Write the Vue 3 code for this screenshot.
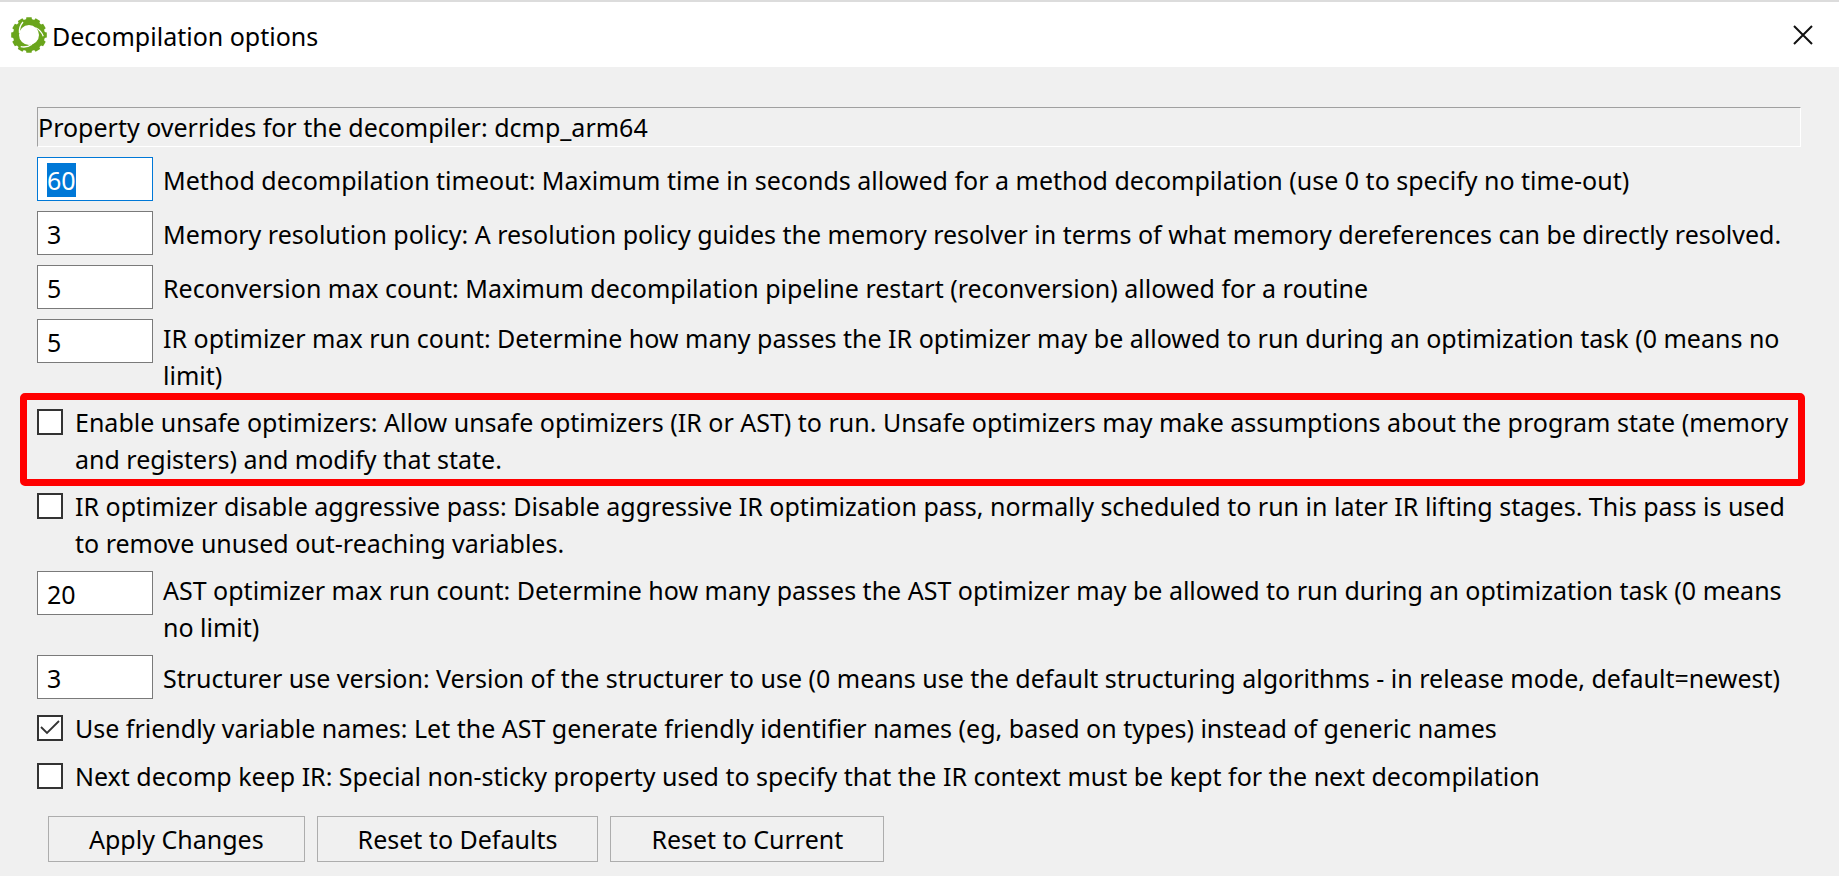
<script setup>
import { onMounted, reactive, ref } from 'vue'

const options = reactive([
  { id: 'timeout', kind: 'number', value: '60', text: 'Method decompilation timeout: Maximum time in seconds allowed for a method decompilation (use 0 to specify no time-out)' },
  { id: 'memory', kind: 'number', value: '3', text: 'Memory resolution policy: A resolution policy guides the memory resolver in terms of what memory dereferences can be directly resolved.' },
  { id: 'reconversion', kind: 'number', value: '5', text: 'Reconversion max count: Maximum decompilation pipeline restart (reconversion) allowed for a routine' },
  { id: 'ir-runs', kind: 'number', value: '5', text: 'IR optimizer max run count: Determine how many passes the IR optimizer may be allowed to run during an optimization task (0 means no limit)' },
  { id: 'unsafe', kind: 'check', value: false, marked: true, text: 'Enable unsafe optimizers: Allow unsafe optimizers (IR or AST) to run. Unsafe optimizers may make assumptions about the program state (memory and registers) and modify that state.' },
  { id: 'aggressive', kind: 'check', value: false, text: 'IR optimizer disable aggressive pass: Disable aggressive IR optimization pass, normally scheduled to run in later IR lifting stages. This pass is used to remove unused out-reaching variables.' },
  { id: 'ast-runs', kind: 'number', value: '20', text: 'AST optimizer max run count: Determine how many passes the AST optimizer may be allowed to run during an optimization task (0 means no limit)' },
  { id: 'structurer', kind: 'number', value: '3', text: 'Structurer use version: Version of the structurer to use (0 means use the default structuring algorithms - in release mode, default=newest)' },
  { id: 'friendly', kind: 'check', value: true, text: 'Use friendly variable names: Let the AST generate friendly identifier names (eg, based on types) instead of generic names' },
  { id: 'keep-ir', kind: 'check', value: false, text: 'Next decomp keep IR: Special non-sticky property used to specify that the IR context must be kept for the next decompilation' }
])

const form = ref(null)
onMounted(() => {
  const first = form.value.querySelector('input')
  first.focus()
  first.select()
})

const teeth = Array.from({ length: 12 }, (_, i) => i * 30)
</script>

<template>
  <div class="dialog">
    <header class="titlebar">
      <svg class="logo" viewBox="0 0 36 36" aria-hidden="true">
        <g fill="#6aa51c">
          <path v-for="a in teeth" :key="a" d="M14.6 5 L15.4 0.2 H20.6 L21.4 5 Z" :transform="`rotate(${a} 18 18)`" />
        </g>
        <circle cx="18" cy="18" r="13" fill="none" stroke="#6aa51c" stroke-width="6" />
        <g fill="none" stroke="#fff" stroke-width="1.3">
          <path d="M8.5 16 C8 12 9 8.5 12 5" />
          <path d="M8.5 16 C8 12 9 8.5 12 5" transform="rotate(120 18 18)" />
          <path d="M8.5 16 C8 12 9 8.5 12 5" transform="rotate(240 18 18)" />
        </g>
      </svg>
      <h1>Decompilation options</h1>
      <button class="close" type="button" aria-label="Close">
        <svg viewBox="0 0 20 20" aria-hidden="true"><path d="M1 1 L19 19 M19 1 L1 19" fill="none" stroke="#111" stroke-width="2" /></svg>
      </button>
    </header>

    <form ref="form" class="body" @submit.prevent>
      <p class="heading">Property overrides for the decompiler: dcmp_arm64</p>
      <div v-for="o in options" :key="o.id" class="row" :class="[o.kind, { marked: o.marked }]">
        <input v-if="o.kind === 'number'" :id="o.id" v-model="o.value" class="field" type="text" />
        <span v-else class="box">
          <input :id="o.id" v-model="o.value" type="checkbox" />
          <svg v-if="o.value" viewBox="0 0 26 26" aria-hidden="true"><path d="M4 12 L10 18 L22 6" fill="none" stroke="#333" stroke-width="1.8" /></svg>
        </span>
        <label :for="o.id">{{ o.text }}</label>
      </div>
      <div class="actions">
        <button type="button">Apply Changes</button>
        <button type="button">Reset to Defaults</button>
        <button type="button">Reset to Current</button>
      </div>
    </form>
  </div>
</template>

<style>
body { background: #f0f0f0; }
</style>

<style scoped>
.dialog {
  box-sizing: border-box;
  min-height: 100vh;
  border-top: 2px solid #dcdcdc;
  background: #f0f0f0;
  color: #000;
  font-family: "Noto Sans", "Open Sans", sans-serif;
  font-size: 25px;
  line-height: 37px;
}
.titlebar {
  display: flex;
  align-items: center;
  height: 65px;
  padding: 0 26px 0 11px;
  background: #fff;
}
.logo { width: 36px; height: 36px; flex: none; }
h1 { flex: 1; margin: 0 0 0 5px; padding-top: 3px; font-size: inherit; font-weight: 400; }
.close { display: flex; padding: 0; border: 0; background: none; }
.close svg { width: 20px; height: 20px; }
.body { display: flex; flex-direction: column; gap: 10px; padding: 40px 38px 12px 37px; }
.heading {
  margin: 0;
  border: 1px solid #fff;
  border-top-color: #a0a0a0;
  border-left-color: #a0a0a0;
  line-height: 38px;
}
.row { position: relative; display: flex; align-items: flex-start; min-height: 38px; }
.number { gap: 10px; }
.check { gap: 12px; }
.row label { flex: 1; margin: 1px 0 -1px; }
.number label { align-self: center; }
.field {
  box-sizing: border-box;
  width: 116px;
  height: 44px;
  padding: 3px 9px 2px;
  border: 1px solid #7a7a7a;
  outline: 0;
  background: #fff;
  color: inherit;
  font: inherit;
}
.field:focus { border-color: #0078d7; }
.field::selection { background: #0078d7; color: #fff; }
.box { position: relative; flex: none; width: 26px; height: 26px; margin-top: 6px; }
.box input {
  display: block;
  box-sizing: border-box;
  appearance: none;
  width: 26px;
  height: 26px;
  margin: 0;
  border: 2px solid #333;
  background: #fff;
}
.box svg { position: absolute; inset: 0; pointer-events: none; }
.marked::after {
  content: "";
  position: absolute;
  inset: -10px -4px -9px -17px;
  border: 7px solid #f00;
  border-radius: 5px;
  pointer-events: none;
}
.actions { display: flex; gap: 12px; padding: 11px 11px 0; }
.actions button {
  box-sizing: border-box;
  height: 46px;
  padding: 0 40px;
  border: 1px solid #adadad;
  background: #f0f0f0;
  color: inherit;
  font: inherit;
}
</style>
